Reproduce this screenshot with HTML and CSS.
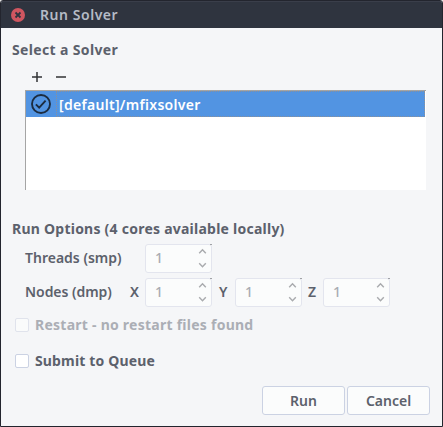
FILE: index.html
```html
<!DOCTYPE html>
<html lang="en">
<head>
<meta charset="utf-8">
<title>Run Solver</title>
<link rel="stylesheet" href="styles.css">
</head>
<body>
<main class="window">
  <header class="titlebar">
    <svg class="close" viewBox="0 0 14 14"><circle cx="7" cy="7" r="7" fill="#d05660"/><path d="M4.5 4.5l5 5M9.5 4.5l-5 5" stroke="#2f343f" stroke-width="1.8"/></svg>
    <span class="title">Run Solver</span>
  </header>
  <h2 class="heading select">Select a Solver</h2>
  <div class="toolbar">
    <svg viewBox="0 0 10 10"><path d="M0 5h10M5 0v10" stroke="#303235" stroke-width="1.5"/></svg>
    <svg viewBox="0 0 10 10"><path d="M0 5h10" stroke="#303235" stroke-width="1.5"/></svg>
  </div>
  <div class="list">
    <div class="item">
      <svg class="check" viewBox="0 0 20 20"><circle cx="10" cy="10" r="9" fill="none" stroke="#1c2c40" stroke-width="1.9"/><path d="M4.9 10.3l3.3 3.4 6.4-7" fill="none" stroke="#1c2c40" stroke-width="1.9"/></svg>
      <div class="cell"><span class="name">[default]/mfixsolver</span></div>
    </div>
  </div>
  <h2 class="heading options">Run Options (4 cores available locally)</h2>
  <div class="row">
    <span class="label threads">Threads (smp)</span>
    <div class="spin"><span>1</span><svg viewBox="0 0 9 20"><path d="M1.2 5.3l3.3-3.6 3.3 3.6M1.2 15.2l3.3 3.6 3.3-3.6" /></svg></div>
  </div>
  <div class="row">
    <span class="label nodes">Nodes (dmp)</span>
    <span class="axis x">X</span>
    <div class="spin"><span>1</span><svg viewBox="0 0 9 20"><path d="M1.2 5.3l3.3-3.6 3.3 3.6M1.2 15.2l3.3 3.6 3.3-3.6" /></svg></div>
    <span class="axis y">Y</span>
    <div class="spin"><span>1</span><svg viewBox="0 0 9 20"><path d="M1.2 5.3l3.3-3.6 3.3 3.6M1.2 15.2l3.3 3.6 3.3-3.6" /></svg></div>
    <span class="axis z">Z</span>
    <div class="spin"><span>1</span><svg viewBox="0 0 9 20"><path d="M1.2 5.3l3.3-3.6 3.3 3.6M1.2 15.2l3.3 3.6 3.3-3.6" /></svg></div>
  </div>
  <div class="option disabled"><i class="box"></i><span class="restart">Restart - no restart files found</span></div>
  <div class="option"><i class="box"></i><span class="submit">Submit to Queue</span></div>
  <footer class="actions">
    <button class="button run">Run</button>
    <button class="button cancel">Cancel</button>
  </footer>
</main>
</body>
</html>
```
FILE: styles.css
```css
* { box-sizing: border-box; }
body { margin: 0; background: #e8e8e8; }
.window {
  width: 443px; height: 427px; overflow: hidden;
  border: 1px solid #23252e; border-radius: 3px 3px 0 0;
  background: #f5f6f8; color: #5c616c;
  font: 500 14px/20px "Noto Sans", "Open Sans", sans-serif;
  white-space: nowrap;
}
.titlebar {
  height: 27px; display: flex; align-items: center; padding-left: 10px;
  background: #2f343f; border-top: 1px solid #3a3e4a;
  color: #b5bbc6; font-weight: 600; letter-spacing: 0.55px;
}
.close { width: 14px; height: 14px; margin-right: 15px; }
.heading { margin: 0; font-size: 14px; line-height: 20px; font-weight: 700; }
.select { margin: 12px 0 0 11px; letter-spacing: 0.35px; }
.toolbar { display: flex; gap: 14px; margin: 12px 0 0 31px; height: 18px; }
.toolbar svg { width: 10px; height: 10px; }
.list {
  width: 401px; height: 100px; margin-left: 24px; background: #fff;
  border-top: 1px solid #a5a5a5; border-left: 1px solid #a5a5a5;
}
.item { height: 26px; margin-right: 1px; display: flex; align-items: center; background: #5294e2; color: #fff; padding-left: 5px; }
.check { width: 20px; height: 20px; margin-right: 5px; }
.cell { flex: 1; height: 26px; padding: 3px 2px 1px; border: 1px dotted #8c9099; font-weight: 600; letter-spacing: 0.3px; }
.options { margin: 29px 0 4px 11px; letter-spacing: 0.24px; }
.row { display: flex; align-items: center; height: 30px; margin: 0 0 4px 24px; }
.label { width: 120px; font-weight: 600; letter-spacing: 0; }
.label.nodes { width: 105px; letter-spacing: -0.05px; }
.axis { width: 15px; font-weight: 600; }
.axis.y { width: 16px; margin-left: 7px; }
.axis.z { width: 15px; margin-left: 6px; }
.spin {
  position: relative;
  width: 67px; height: 29px; display: flex; align-items: center; justify-content: space-between;
  padding: 0 4px 0 9px; background: #fbfcfc; border: 1px solid #e3e5ee; border-radius: 3px;
  color: #a9acb2;
}
.spin::after { content: ""; position: absolute; top: -1px; right: -1px; width: 2px; height: 1px; background: #a0a2a6; }
.spin svg { width: 9px; height: 20px; fill: none; stroke: #a9abae; stroke-width: 1.4; }
.option { display: flex; align-items: center; height: 20px; margin: 16px 0 0 14px; font-weight: 700; letter-spacing: 0.15px; }
.option.disabled { color: #abaeb5; margin-top: 8px; letter-spacing: 0.25px; }
.box { width: 14px; height: 14px; margin-right: 6px; background: #fff; border: 1px solid #cbd2e3; border-radius: 2px; }
.disabled .box { background: #fafbfb; border-color: #e0e3ec; }
.actions { display: flex; gap: 2px; margin: 15px 0 0 261px; }
.button {
  width: 83px; height: 29px; padding: 0; background: #fbfcfc;
  border: 1px solid #cbd2e3; border-radius: 3px; color: inherit; font: inherit; font-weight: 600;
}
```
